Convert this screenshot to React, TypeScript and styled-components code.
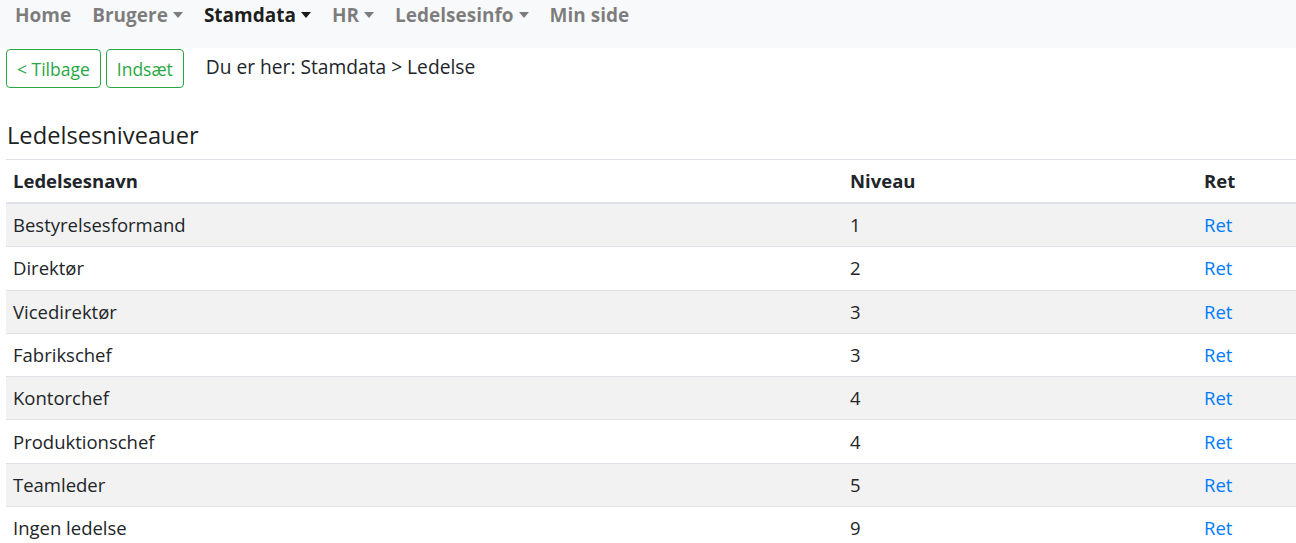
import { FC } from 'react';
import styled, { createGlobalStyle } from 'styled-components';

const GlobalStyle = createGlobalStyle`
  html, body {
    margin: 0;
    padding: 0;
    background: #fff;
  }
  body {
    font-family: 'Open Sans', 'Noto Sans', 'Liberation Sans', sans-serif;
    color: #212529;
    overflow: hidden;
  }
`;

type Row = {
  name: string;
  level: number;
};

const rows: Row[] = [
  { name: 'Bestyrelsesformand', level: 1 },
  { name: 'Direktør', level: 2 },
  { name: 'Vicedirektør', level: 3 },
  { name: 'Fabrikschef', level: 3 },
  { name: 'Kontorchef', level: 4 },
  { name: 'Produktionschef', level: 4 },
  { name: 'Teamleder', level: 5 },
  { name: 'Ingen ledelse', level: 9 },
];

const navItems = [
  { label: 'Home', dropdown: false, active: false },
  { label: 'Brugere', dropdown: true, active: false },
  { label: 'Stamdata', dropdown: true, active: true },
  { label: 'HR', dropdown: true, active: false },
  { label: 'Ledelsesinfo', dropdown: true, active: false },
  { label: 'Min side', dropdown: false, active: false },
];

const App: FC = () => {
  return (
    <>
      <GlobalStyle />
      <Navbar>
        {navItems.map((item) => (
          <NavLink key={item.label} $active={item.active}>
            {item.label}
            {item.dropdown && <Caret />}
          </NavLink>
        ))}
      </Navbar>
      <Content>
        <Toolbar>
          <OutlineButton>&lt; Tilbage</OutlineButton>
          <OutlineButton>Indsæt</OutlineButton>
          <Breadcrumb>Du er her: Stamdata &gt; Ledelse</Breadcrumb>
        </Toolbar>
        <Title>Ledelsesniveauer</Title>
        <Table>
          <colgroup>
            <col style={{ width: 837 }} />
            <col style={{ width: 354 }} />
            <col />
          </colgroup>
          <thead>
            <tr>
              <Th>Ledelsesnavn</Th>
              <Th>Niveau</Th>
              <Th>Ret</Th>
            </tr>
          </thead>
          <tbody>
            {rows.map((row, i) => (
              <Tr key={row.name} $striped={i % 2 === 0}>
                <Td>{row.name}</Td>
                <Td>{row.level}</Td>
                <Td>
                  <EditLink href="#">Ret</EditLink>
                </Td>
              </Tr>
            ))}
          </tbody>
        </Table>
      </Content>
    </>
  );
};

export default App;

const Navbar = styled.nav`
  height: 48px;
  background: #f8f9fa;
  display: flex;
  align-items: flex-start;
  padding: 2px 0 0 15px;
  box-sizing: border-box;
  gap: 21px;
`;

const NavLink = styled.a<{ $active: boolean }>`
  display: flex;
  align-items: center;
  font-size: 19px;
  font-weight: 700;
  line-height: 26px;
  color: ${({ $active }) => ($active ? 'rgba(0, 0, 0, 0.9)' : 'rgba(0, 0, 0, 0.5)')};
  cursor: pointer;
`;

const Caret = styled.span`
  display: inline-block;
  margin-left: 5px;
  width: 0;
  height: 0;
  border-top: 6px solid currentColor;
  border-left: 5.5px solid transparent;
  border-right: 5.5px solid transparent;
`;

const Content = styled.main`
  padding: 1px 0 0 6px;
`;

const Toolbar = styled.div`
  display: flex;
  align-items: center;
  gap: 5px;
`;

const OutlineButton = styled.button`
  height: 39px;
  padding: 0 10px;
  font-family: inherit;
  font-size: 17.5px;
  color: #28a745;
  background: #fff;
  border: 1px solid #28a745;
  border-radius: 4px;
  cursor: pointer;
`;

const Breadcrumb = styled.span`
  margin: 0 0 4px 17px;
  font-size: 19.2px;
`;

const Title = styled.h4`
  margin: 32px 0 9px 1px;
  font-size: 23.7px;
  font-weight: 500;
  line-height: 30px;
  color: #1c1f23;
`;

const Table = styled.table`
  width: 100%;
  border-collapse: collapse;
  table-layout: fixed;
  font-size: 18.5px;
`;

const Th = styled.th`
  text-align: left;
  padding: 8px 7px;
  line-height: 26px;
  font-weight: 700;
  border-top: 1px solid #dee2e6;
  border-bottom: 2px solid #dee2e6;
`;

const Tr = styled.tr<{ $striped: boolean }>`
  background: ${({ $striped }) => ($striped ? '#f2f2f2' : '#fff')};
`;

const Td = styled.td`
  padding: 8.15px 7px;
  line-height: 26px;
  border-top: 1px solid #dee2e6;
`;

const EditLink = styled.a`
  color: #007bff;
  text-decoration: none;
`;
